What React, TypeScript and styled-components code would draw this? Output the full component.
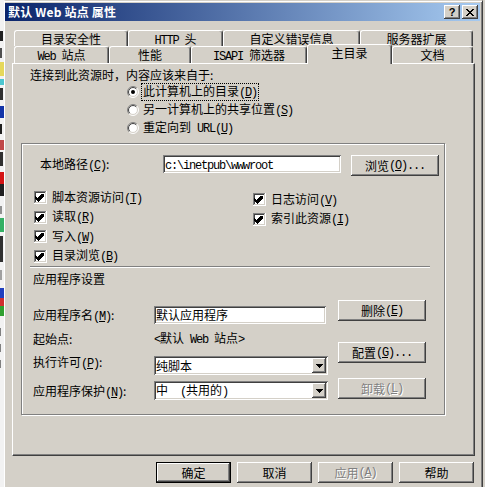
import React from "react";
import styled, { createGlobalStyle, css } from "styled-components";

const FACE = "#D4D0C8";
const SHADOW = "#808080";
const DARK = "#404040";
const HILITE = "#FFFFFF";

const GlobalStyle = createGlobalStyle`
  * { box-sizing: border-box; }
  html, body { margin: 0; padding: 0; background: ${FACE}; }
  body {
    font-family: "Noto Sans CJK SC", "Liberation Sans", sans-serif;
    font-size: 12px;
    line-height: 14px;
    color: #000;
  }
  #root { width: 485px; height: 487px; overflow: hidden; }
`;

const raised = css`
  background: ${FACE};
  box-shadow: inset -1px -1px 0 ${DARK}, inset 1px 1px 0 ${HILITE},
    inset -2px -2px 0 ${SHADOW}, inset 2px 2px 0 ${FACE};
`;

const sunken = css`
  background: #fff;
  box-shadow: inset 1px 1px 0 ${SHADOW}, inset -1px -1px 0 ${HILITE},
    inset 2px 2px 0 ${DARK}, inset -2px -2px 0 ${FACE};
`;

const Page = styled.div`
  display: flex;
  width: 485px;
  height: 487px;
  overflow: hidden;
  background: ${FACE};
`;

const Backdrop = styled.svg`
  flex: 0 0 4px;
  width: 4px;
  height: 487px;
  display: block;
`;

const Window = styled.div`
  flex: 0 0 479px;
  height: 487px;
  display: flex;
  flex-direction: column;
  background: ${FACE};
  border-top: 1px solid ${FACE};
  border-left: 1px solid ${HILITE};
  border-right: 1px solid ${DARK};
  padding: 2px 2px 0 0;
  box-shadow: inset 0 1px 0 ${HILITE}, inset -1px 0 0 ${SHADOW};
`;

const TitleBar = styled.div`
  height: 18px;
  flex: 0 0 18px;
  display: flex;
  align-items: center;
  padding: 0 2px 0 3px;
  background: linear-gradient(to right, #0a246a, #a6caf0);
  color: #fff;
  font-weight: bold;
`;

const TitleText = styled.div`
  flex: 1;
  white-space: nowrap;
  letter-spacing: 0.2px;
`;

const CaptionButton = styled.div<{ $gap?: number }>`
  ${raised};
  width: 16px;
  height: 14px;
  margin-left: ${(p) => p.$gap ?? 0}px;
  display: flex;
  align-items: center;
  justify-content: center;
  color: #000;
  font-family: "Liberation Sans", sans-serif;
  font-weight: bold;
  font-size: 11px;
  line-height: 12px;
`;

const Body = styled.div`
  flex: 1;
  display: flex;
  flex-direction: column;
  padding: 9px 5px 0 7px;
`;

const TabRow = styled.div<{ $h: number }>`
  display: flex;
  height: ${(p) => p.$h}px;
  margin-left: 2px;
`;

const Tab = styled.div<{ $w: number; $h: number; $active?: boolean }>`
  flex: 0 0 ${(p) => p.$w}px;
  height: ${(p) => p.$h}px;
  background: ${FACE};
  border-top: 1px solid ${HILITE};
  border-left: 1px solid ${HILITE};
  border-right: 1px solid ${DARK};
  border-radius: 3px 3px 0 0;
  box-shadow: inset -1px 0 0 ${SHADOW};
  padding-top: 1px;
  text-align: center;
  white-space: nowrap;
  ${(p) =>
    p.$active &&
    css`
      position: relative;
      z-index: 1;
      margin-top: -2px;
    `}
`;

const Panel = styled.div`
  width: 463px;
  height: 393px;
  display: flex;
  flex-direction: column;
  padding-top: 4px;
  border-top: 1px solid ${HILITE};
  border-left: 1px solid ${HILITE};
  border-right: 1px solid ${DARK};
  border-bottom: 1px solid ${DARK};
  box-shadow: inset -1px -1px 0 ${SHADOW};
`;

const Prompt = styled.div`
  margin-left: 17px;
  height: 14px;
  white-space: nowrap;
`;

const RadioGroup = styled.div`
  margin: 1px 0 0 114px;
  display: flex;
  flex-direction: column;
`;

const OptionRow = styled.div<{ $h: number }>`
  height: ${(p) => p.$h}px;
  display: flex;
  align-items: center;
  gap: 4px;
  white-space: nowrap;
`;

const FocusLabel = styled.span<{ $focus?: boolean }>`
  padding: 0 1px;
  margin-left: -1px;
  outline: ${(p) => (p.$focus ? "1px dotted #000" : "none")};
  outline-offset: 0;
`;

const Frame = styled.div`
  margin: 6px 0 0 8px;
  width: 424px;
  height: 272px;
  display: flex;
  flex-direction: column;
  border: 1px solid ${SHADOW};
  box-shadow: inset 1px 1px 0 ${HILITE}, 1px 1px 0 ${HILITE};
`;

const PathRow = styled.div`
  margin-top: 11px;
  padding-left: 18px;
  display: flex;
  align-items: flex-start;
`;

const Label = styled.div<{ $w: number; $h?: number; $top?: boolean }>`
  flex: 0 0 ${(p) => p.$w}px;
  height: ${(p) => p.$h ?? 14}px;
  line-height: ${(p) => p.$h ?? 14}px;
  white-space: nowrap;
  ${(p) =>
    p.$top &&
    css`
      align-self: flex-start;
      margin-top: -1px;
    `}
`;

const TextBox = styled.div<{ $w: number; $h?: number }>`
  ${sunken};
  width: ${(p) => p.$w}px;
  height: ${(p) => p.$h ?? 18}px;
  padding: 2px 2px 0 2px;
  line-height: 14px;
  white-space: nowrap;
  overflow: hidden;
`;

const ComboBox = styled.div`
  ${sunken};
  width: 174px;
  height: 19px;
  display: flex;
  align-items: center;
  padding: 2px;
`;

const ComboText = styled.div`
  flex: 1;
  line-height: 14px;
  white-space: nowrap;
`;

const ComboArrow = styled.div`
  ${raised};
  width: 14px;
  height: 15px;
  display: flex;
  align-items: center;
  justify-content: center;
`;

const Button = styled.div<{
  $w: number;
  $h?: number;
  $gapTop?: number;
  $default?: boolean;
  $disabled?: boolean;
}>`
  ${raised};
  flex: 0 0 auto;
  width: ${(p) => p.$w}px;
  height: ${(p) => p.$h ?? 21}px;
  margin-top: ${(p) => p.$gapTop ?? 0}px;
  display: flex;
  align-items: center;
  justify-content: center;
  white-space: nowrap;
  ${(p) =>
    p.$default &&
    css`
      border: 1px solid #000;
    `}
  ${(p) =>
    p.$disabled &&
    css`
      color: ${SHADOW};
      text-shadow: 1px 1px 0 ${HILITE};
    `}
`;

const BrowseButton = styled(Button)`
  margin-left: 10px;
`;

const CheckArea = styled.div`
  margin-top: 12px;
  display: flex;
`;

const CheckColumn = styled.div<{ $left: number; $w?: number; $top?: number }>`
  margin-left: ${(p) => p.$left}px;
  width: ${(p) => (p.$w ? `${p.$w}px` : "auto")};
  padding-top: ${(p) => p.$top ?? 0}px;
  display: flex;
  flex-direction: column;
`;

const CheckRow = styled.div`
  height: 19.5px;
  display: flex;
  align-items: center;
  gap: 5px;
  white-space: nowrap;
`;

const Separator = styled.div`
  margin-left: 8px;
  width: 400px;
  height: 2px;
  border-top: 1px solid ${SHADOW};
  border-bottom: 1px solid ${HILITE};
`;

const SectionTitle = styled.div`
  margin-top: 4px;
  padding-left: 11px;
  height: 14px;
`;

const AppSection = styled.div`
  margin-top: 14px;
  padding-left: 11px;
  display: flex;
`;

const FieldColumn = styled.div`
  width: 295px;
  padding-top: 6px;
  display: flex;
  flex-direction: column;
`;

const FieldRow = styled.div<{ $h: number; $gapTop?: number }>`
  height: ${(p) => p.$h}px;
  margin-top: ${(p) => p.$gapTop ?? 0}px;
  display: flex;
  align-items: center;
`;

const ButtonColumn = styled.div`
  margin-left: 10px;
  display: flex;
  flex-direction: column;
`;

const DialogButtons = styled.div`
  margin-top: 6px;
  display: flex;
  justify-content: flex-end;
  gap: 6px;
  padding-right: 1px;
`;

const Lat = styled.span`
  font-family: "Liberation Mono", monospace;
  font-size: 12px;
  letter-spacing: -1.2px;
  white-space: pre;
`;

const Key: React.FC<{ k: string; dots?: boolean }> = ({ k, dots }) => (
  <Lat>
    (<u>{k}</u>){dots ? "..." : ""}
  </Lat>
);

const Radio: React.FC<{ checked?: boolean }> = ({ checked }) => {
  const arc = (r: number) => {
    const d = r * 0.7071;
    return { bl: `${6 - d} ${6 + d}`, tr: `${6 + d} ${6 - d}`, r };
  };
  const a = arc(5.5);
  const b = arc(4.5);
  return (
    <svg width="12" height="12" viewBox="0 0 12 12" style={{ flex: "0 0 12px" }}>
      <circle cx="6" cy="6" r="5" fill="#fff" />
      <path d={`M${a.bl} A${a.r} ${a.r} 0 0 1 ${a.tr}`} stroke={SHADOW} fill="none" />
      <path d={`M${b.bl} A${b.r} ${b.r} 0 0 1 ${b.tr}`} stroke={DARK} fill="none" />
      <path d={`M${a.tr} A${a.r} ${a.r} 0 0 1 ${a.bl}`} stroke={HILITE} fill="none" />
      <path d={`M${b.tr} A${b.r} ${b.r} 0 0 1 ${b.bl}`} stroke={FACE} fill="none" />
      {checked && <circle cx="6" cy="6" r="2" fill="#000" />}
    </svg>
  );
};

const Check: React.FC = () => (
  <svg width="13" height="13" viewBox="0 0 13 13" shapeRendering="crispEdges" style={{ flex: "0 0 13px" }}>
    <rect x="0" y="0" width="13" height="13" fill={HILITE} />
    <rect x="0" y="0" width="12" height="12" fill={SHADOW} />
    <rect x="1" y="1" width="11" height="11" fill={FACE} />
    <rect x="1" y="1" width="10" height="10" fill={DARK} />
    <rect x="2" y="2" width="9" height="9" fill="#fff" />
    <path
      d="M9 3h1v3h-1v1h-1v1h-1v1h-1v1h-1v1h-1v-1h-1v-1h-1v-1h-1v-3h1v1h1v1h1v-1h1v-1h1v-1h1v-1h1z"
      fill="#000"
    />
  </svg>
);

const DownArrow: React.FC = () => (
  <svg width="7" height="4" viewBox="0 0 7 4" shapeRendering="crispEdges">
    <path d="M0 0h7v1h-1v1h-1v1h-1v1h-1v-1h-1v-1h-1v-1h-1z" fill="#000" />
  </svg>
);

const CloseGlyph: React.FC = () => (
  <svg width="8" height="7" viewBox="0 0 8 7" shapeRendering="crispEdges">
    <path
      d="M0 0h2v1h1v1h2v-1h1v-1h2v1h-1v1h-1v1h-1v1h1v1h1v1h1v1h-2v-1h-1v-1h-2v1h-1v1h-2v-1h1v-1h1v-1h1v-1h-1v-1h-1v-1h-1z"
      fill="#000"
    />
  </svg>
);

const clutter: { y: number; h: number; c: string; x?: number; w?: number }[] = [
  { y: 31, h: 10, c: "#202020", w: 3 },
  { y: 48, h: 10, c: "#505050", w: 2 },
  { y: 62, h: 14, c: "#e6d85a" },
  { y: 79, h: 6, c: "#4cc6d0" },
  { y: 88, h: 12, c: "#303030", w: 3 },
  { y: 106, h: 12, c: "#1234a8" },
  { y: 124, h: 10, c: "#202020", w: 2 },
  { y: 140, h: 10, c: "#c04848" },
  { y: 152, h: 14, c: "#303030", w: 3 },
  { y: 172, h: 12, c: "#d41414" },
  { y: 184, h: 12, c: "#202020" },
  { y: 206, h: 8, c: "#909090", w: 2 },
  { y: 218, h: 14, c: "#34b064" },
  { y: 236, h: 26, c: "#303030", w: 3 },
  { y: 270, h: 10, c: "#a0a0a0", w: 2 },
  { y: 288, h: 10, c: "#2040c0" },
  { y: 298, h: 8, c: "#d03030" },
  { y: 306, h: 10, c: "#30a030" },
  { y: 328, h: 8, c: "#808080", w: 1 },
  { y: 344, h: 8, c: "#808080", w: 1 },
  { y: 360, h: 8, c: "#808080", w: 1 },
];

const row1 = [
  { label: <>目录安全性</>, w: 114 },
  { label: <><Lat>HTTP </Lat>头</>, w: 95 },
  { label: <>自定义错误信息</>, w: 137 },
  { label: <>服务器扩展</>, w: 113 },
];

const row2 = [
  { label: <><Lat>Web </Lat>站点</>, w: 95 },
  { label: <>性能</>, w: 82 },
  { label: <><Lat>ISAPI </Lat>筛选器</>, w: 116 },
  { label: <>主目录</>, w: 85, active: true },
  { label: <>文档</>, w: 81 },
];

export default function App() {
  return (
    <Page>
      <GlobalStyle />
      <Backdrop viewBox="0 0 4 487" shapeRendering="crispEdges">
        <rect x="0" y="0" width="4" height="487" fill="#f2f2f2" />
        {clutter.map((r, i) => (
          <rect key={i} x={r.x ?? 0} y={r.y} width={r.w ?? 4} height={r.h} fill={r.c} />
        ))}
      </Backdrop>
      <Window>
        <TitleBar>
          <TitleText>默认 Web 站点 属性</TitleText>
          <CaptionButton>?</CaptionButton>
          <CaptionButton $gap={2}>
            <CloseGlyph />
          </CaptionButton>
        </TitleBar>
        <Body>
          <TabRow $h={16}>
            {row1.map((t, i) => (
              <Tab key={i} $w={t.w} $h={16}>
                {t.label}
              </Tab>
            ))}
          </TabRow>
          <TabRow $h={17}>
            {row2.map((t, i) => (
              <Tab key={i} $w={t.w} $h={t.active ? 20 : 17} $active={t.active}>
                {t.label}
              </Tab>
            ))}
          </TabRow>
          <Panel>
            <Prompt>连接到此资源时，内容应该来自于:</Prompt>
            <RadioGroup>
              <OptionRow $h={18}>
                <Radio checked />
                <FocusLabel $focus>
                  此计算机上的目录<Key k="D" />
                </FocusLabel>
              </OptionRow>
              <OptionRow $h={18}>
                <Radio />
                <FocusLabel>
                  另一计算机上的共享位置<Key k="S" />
                </FocusLabel>
              </OptionRow>
              <OptionRow $h={18}>
                <Radio />
                <FocusLabel>
                  重定向到<Lat> URL</Lat>
                  <Key k="U" />
                </FocusLabel>
              </OptionRow>
            </RadioGroup>
            <Frame>
              <PathRow>
                <Label $w={123} $h={18}>
                  本地路径<Key k="C" />:
                </Label>
                <TextBox $w={178}>
                  <Lat>c:\inetpub\wwwroot</Lat>
                </TextBox>
                <BrowseButton $w={88}>
                  浏览<Key k="O" dots />
                </BrowseButton>
              </PathRow>
              <CheckArea>
                <CheckColumn $left={12} $w={219}>
                  <CheckRow>
                    <Check />
                    <span>
                      脚本资源访问<Key k="T" />
                    </span>
                  </CheckRow>
                  <CheckRow>
                    <Check />
                    <span>
                      读取<Key k="R" />
                    </span>
                  </CheckRow>
                  <CheckRow>
                    <Check />
                    <span>
                      写入<Key k="W" />
                    </span>
                  </CheckRow>
                  <CheckRow>
                    <Check />
                    <span>
                      目录浏览<Key k="B" />
                    </span>
                  </CheckRow>
                </CheckColumn>
                <CheckColumn $left={0} $top={2}>
                  <CheckRow>
                    <Check />
                    <span>
                      日志访问<Key k="V" />
                    </span>
                  </CheckRow>
                  <CheckRow>
                    <Check />
                    <span>
                      索引此资源<Key k="I" />
                    </span>
                  </CheckRow>
                </CheckColumn>
              </CheckArea>
              <Separator />
              <SectionTitle>应用程序设置</SectionTitle>
              <AppSection>
                <FieldColumn>
                  <FieldRow $h={18}>
                    <Label $w={121}>
                      应用程序名<Key k="M" />:
                    </Label>
                    <TextBox $w={172}>默认应用程序</TextBox>
                  </FieldRow>
                  <FieldRow $h={14} $gapTop={8}>
                    <Label $w={121}>起始点:</Label>
                    <span>
                      <Lat>{"<"}</Lat>默认<Lat> Web </Lat>站点<Lat>{">"}</Lat>
                    </span>
                  </FieldRow>
                  <FieldRow $h={19} $gapTop={10}>
                    <Label $w={121} $top>
                      执行许可<Key k="P" />:
                    </Label>
                    <ComboBox>
                      <ComboText>纯脚本</ComboText>
                      <ComboArrow>
                        <DownArrow />
                      </ComboArrow>
                    </ComboBox>
                  </FieldRow>
                  <FieldRow $h={19} $gapTop={6}>
                    <Label $w={121}>
                      应用程序保护<Key k="N" />:
                    </Label>
                    <ComboBox>
                      <ComboText>
                        中<Lat>  (</Lat>共用的<Lat>)</Lat>
                      </ComboText>
                      <ComboArrow>
                        <DownArrow />
                      </ComboArrow>
                    </ComboBox>
                  </FieldRow>
                </FieldColumn>
                <ButtonColumn>
                  <Button $w={88}>
                    删除<Key k="E" />
                  </Button>
                  <Button $w={88} $gapTop={21}>
                    配置<Key k="G" dots />
                  </Button>
                  <Button $w={88} $gapTop={15} $disabled>
                    卸载<Key k="L" />
                  </Button>
                </ButtonColumn>
              </AppSection>
            </Frame>
          </Panel>
          <DialogButtons>
            <Button $w={75} $default>
              确定
            </Button>
            <Button $w={75}>取消</Button>
            <Button $w={75} $disabled>
              应用<Key k="A" />
            </Button>
            <Button $w={75}>帮助</Button>
          </DialogButtons>
        </Body>
      </Window>
    </Page>
  );
}
